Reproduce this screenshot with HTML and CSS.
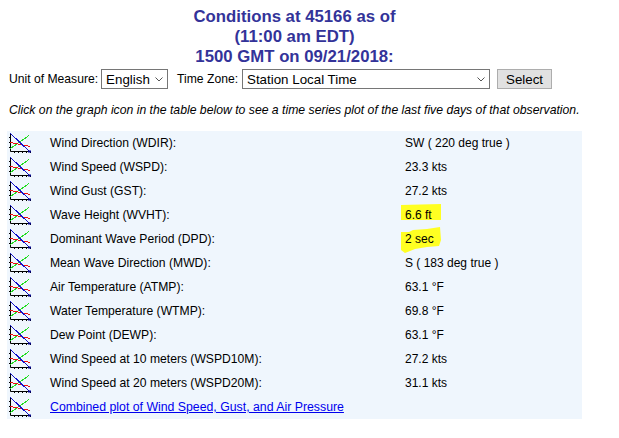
FILE: index.html
```html
<!DOCTYPE html>
<html lang="en">
<head>
<meta charset="utf-8">
<title>Conditions at 45166</title>
<link rel="stylesheet" href="styles.css">
</head>
<body>
<svg class="defs" width="0" height="0" aria-hidden="true">
  <symbol id="plot" viewBox="0 0 22 21">
    <path d="M1.5 0V18.5H22" fill="none" stroke="#000" stroke-width="1"/>
    <path d="M0 4.5h1.5M0 9.5h1.5M0 14.5h1.5M5.5 18.5v1.5M9.5 18.5v1.5M13.5 18.5v1.5M17.5 18.5v1.5M21.5 18.5v1.5" stroke="#000" stroke-width="1"/>
    <path d="M1.5 15.5L20 2.5" fill="none" stroke="#22dd22" stroke-width="1" shape-rendering="crispEdges"/>
    <path d="M1.5 9.5L21 13.5" fill="none" stroke="#ee1111" stroke-width="1" shape-rendering="crispEdges"/>
    <path d="M1.5 0.5L21 19" fill="none" stroke="#1111cc" stroke-width="1" shape-rendering="crispEdges"/>
    <rect x="19" y="17.5" width="3" height="2" fill="#000088"/>
  </symbol>
  <symbol id="chev" viewBox="0 0 8 5">
    <path d="M0.5 0.5L4 4L7.5 0.5" fill="none" stroke="#555" stroke-width="1"/>
  </symbol>
</svg>
<h1 class="title">Conditions at 45166 as of<br>(11:00 am EDT)<br>1500 GMT on 09/21/2018:</h1>
<form class="controls">
  <label for="unit" class="unit-label">Unit of Measure:</label>
  <span class="sel-wrap"><select id="unit" class="sel sel-unit"><option>English</option></select><svg class="chev"><use href="#chev"/></svg></span>
  <label for="tz" class="tz-label">Time Zone:</label>
  <span class="sel-wrap"><select id="tz" class="sel sel-tz"><option>Station Local Time</option></select><svg class="chev"><use href="#chev"/></svg></span>
  <button type="button" class="btn">Select</button>
</form>
<p class="note">Click on the graph icon in the table below to see a time series plot of the last five days of that observation.</p>
<div class="table">
  <div class="row"><svg class="icon"><use href="#plot"/></svg><span class="name">Wind Direction (WDIR):</span><span class="val">SW ( 220 deg true )</span></div>
  <div class="row"><svg class="icon"><use href="#plot"/></svg><span class="name">Wind Speed (WSPD):</span><span class="val">23.3 kts</span></div>
  <div class="row"><svg class="icon"><use href="#plot"/></svg><span class="name">Wind Gust (GST):</span><span class="val">27.2 kts</span></div>
  <div class="row"><svg class="icon"><use href="#plot"/></svg><span class="name">Wave Height (WVHT):</span><span class="val"><svg class="mark mark-a" viewBox="0 0 40 16"><path d="M0 1L40 0V16H0Z"/></svg><span class="over">6.6 ft</span></span></div>
  <div class="row"><svg class="icon"><use href="#plot"/></svg><span class="name">Dominant Wave Period (DPD):</span><span class="val"><svg class="mark mark-b" viewBox="0 0 40 26"><path d="M0 5L8 5L12 3L26 2L39 0L40 13L38 19L26 20L14 22L4 26L0 23Z"/></svg><span class="over">2 sec</span></span></div>
  <div class="row"><svg class="icon"><use href="#plot"/></svg><span class="name">Mean Wave Direction (MWD):</span><span class="val">S ( 183 deg true )</span></div>
  <div class="row"><svg class="icon"><use href="#plot"/></svg><span class="name">Air Temperature (ATMP):</span><span class="val">63.1 °F</span></div>
  <div class="row"><svg class="icon"><use href="#plot"/></svg><span class="name">Water Temperature (WTMP):</span><span class="val">69.8 °F</span></div>
  <div class="row"><svg class="icon"><use href="#plot"/></svg><span class="name">Dew Point (DEWP):</span><span class="val">63.1 °F</span></div>
  <div class="row"><svg class="icon"><use href="#plot"/></svg><span class="name">Wind Speed at 10 meters (WSPD10M):</span><span class="val">27.2 kts</span></div>
  <div class="row"><svg class="icon"><use href="#plot"/></svg><span class="name">Wind Speed at 20 meters (WSPD20M):</span><span class="val">31.1 kts</span></div>
  <div class="row"><svg class="icon"><use href="#plot"/></svg><a class="name link" href="#">Combined plot of Wind Speed, Gust, and Air Pressure</a></div>
</div>
</body>
</html>
```
FILE: styles.css
```css
html, body { margin: 0; padding: 0; background: #fff; }
body {
  width: 619px;
  height: 438px;
  overflow: hidden;
  font-family: "Liberation Sans", Arial, sans-serif;
  font-size: 12px;
  color: #000;
  padding-top: 7px;
  box-sizing: border-box;
}
.defs { position: absolute; }
.title {
  margin: 0;
  width: 589px;
  text-align: center;
  font-size: 16.75px;
  line-height: 20px;
  font-weight: bold;
  color: #333399;
}
.controls {
  display: flex;
  align-items: center;
  height: 20px;
  margin: 2px 0 0 9px;
}
.controls label { margin-right: 4px; font-size: 12.15px; }
.controls .unit-label { margin-right: 3px; }
.sel-wrap {
  position: relative;
  display: block;
  height: 20px;
}
.sel {
  display: block;
  appearance: none;
  -webkit-appearance: none;
  box-sizing: border-box;
  font-family: "Liberation Sans", Arial, sans-serif;
  font-size: 13.33px;
  height: 20px;
  background: #fff;
  border: 1px solid #767676;
  border-radius: 0;
  padding: 0 0 0 4px;
  color: #000;
}
.chev {
  position: absolute;
  right: 5px;
  top: 8px;
  width: 8px;
  height: 5px;
  pointer-events: none;
}
.sel-unit { width: 67px; }
.sel-tz { width: 248px; }
.tz-label { margin-left: 9px; }
.btn {
  box-sizing: border-box;
  width: 55px;
  height: 20px;
  margin-left: 7px;
  padding: 0;
  font-family: "Liberation Sans", Arial, sans-serif;
  font-size: 13.33px;
  background: #e1e1e1;
  border: 1px solid #adadad;
  border-radius: 0;
  color: #000;
}
.note {
  margin: 14px 0 0 9px;
  height: 15px;
  line-height: 15px;
  font-style: italic;
  font-size: 12.22px;
}
.table {
  margin: 13px 0 0 7px;
  width: 575px;
  background: #eff6fd;
}
.row {
  display: flex;
  align-items: center;
  box-sizing: border-box;
  height: 24px;
}
.icon {
  align-self: flex-start;
  width: 22px;
  height: 21px;
  margin: 2px 0 0 2px;
  flex: none;
}
.name {
  margin-left: 19px;
  width: 355px;
  flex: none;
  font-size: 12.15px;
  color: #000;
}
.link {
  width: auto;
  font-size: 12.3px;
  color: #0000ee;
  text-decoration: underline;
}
.val {
  position: relative;
  display: block;
}
.over { position: relative; }
.mark {
  position: absolute;
  fill: #ffff22;
}
.mark-a { left: -4px; top: -4px; width: 40px; height: 16px; }
.mark-b { left: -4px; top: -5px; width: 40px; height: 26px; }
```
